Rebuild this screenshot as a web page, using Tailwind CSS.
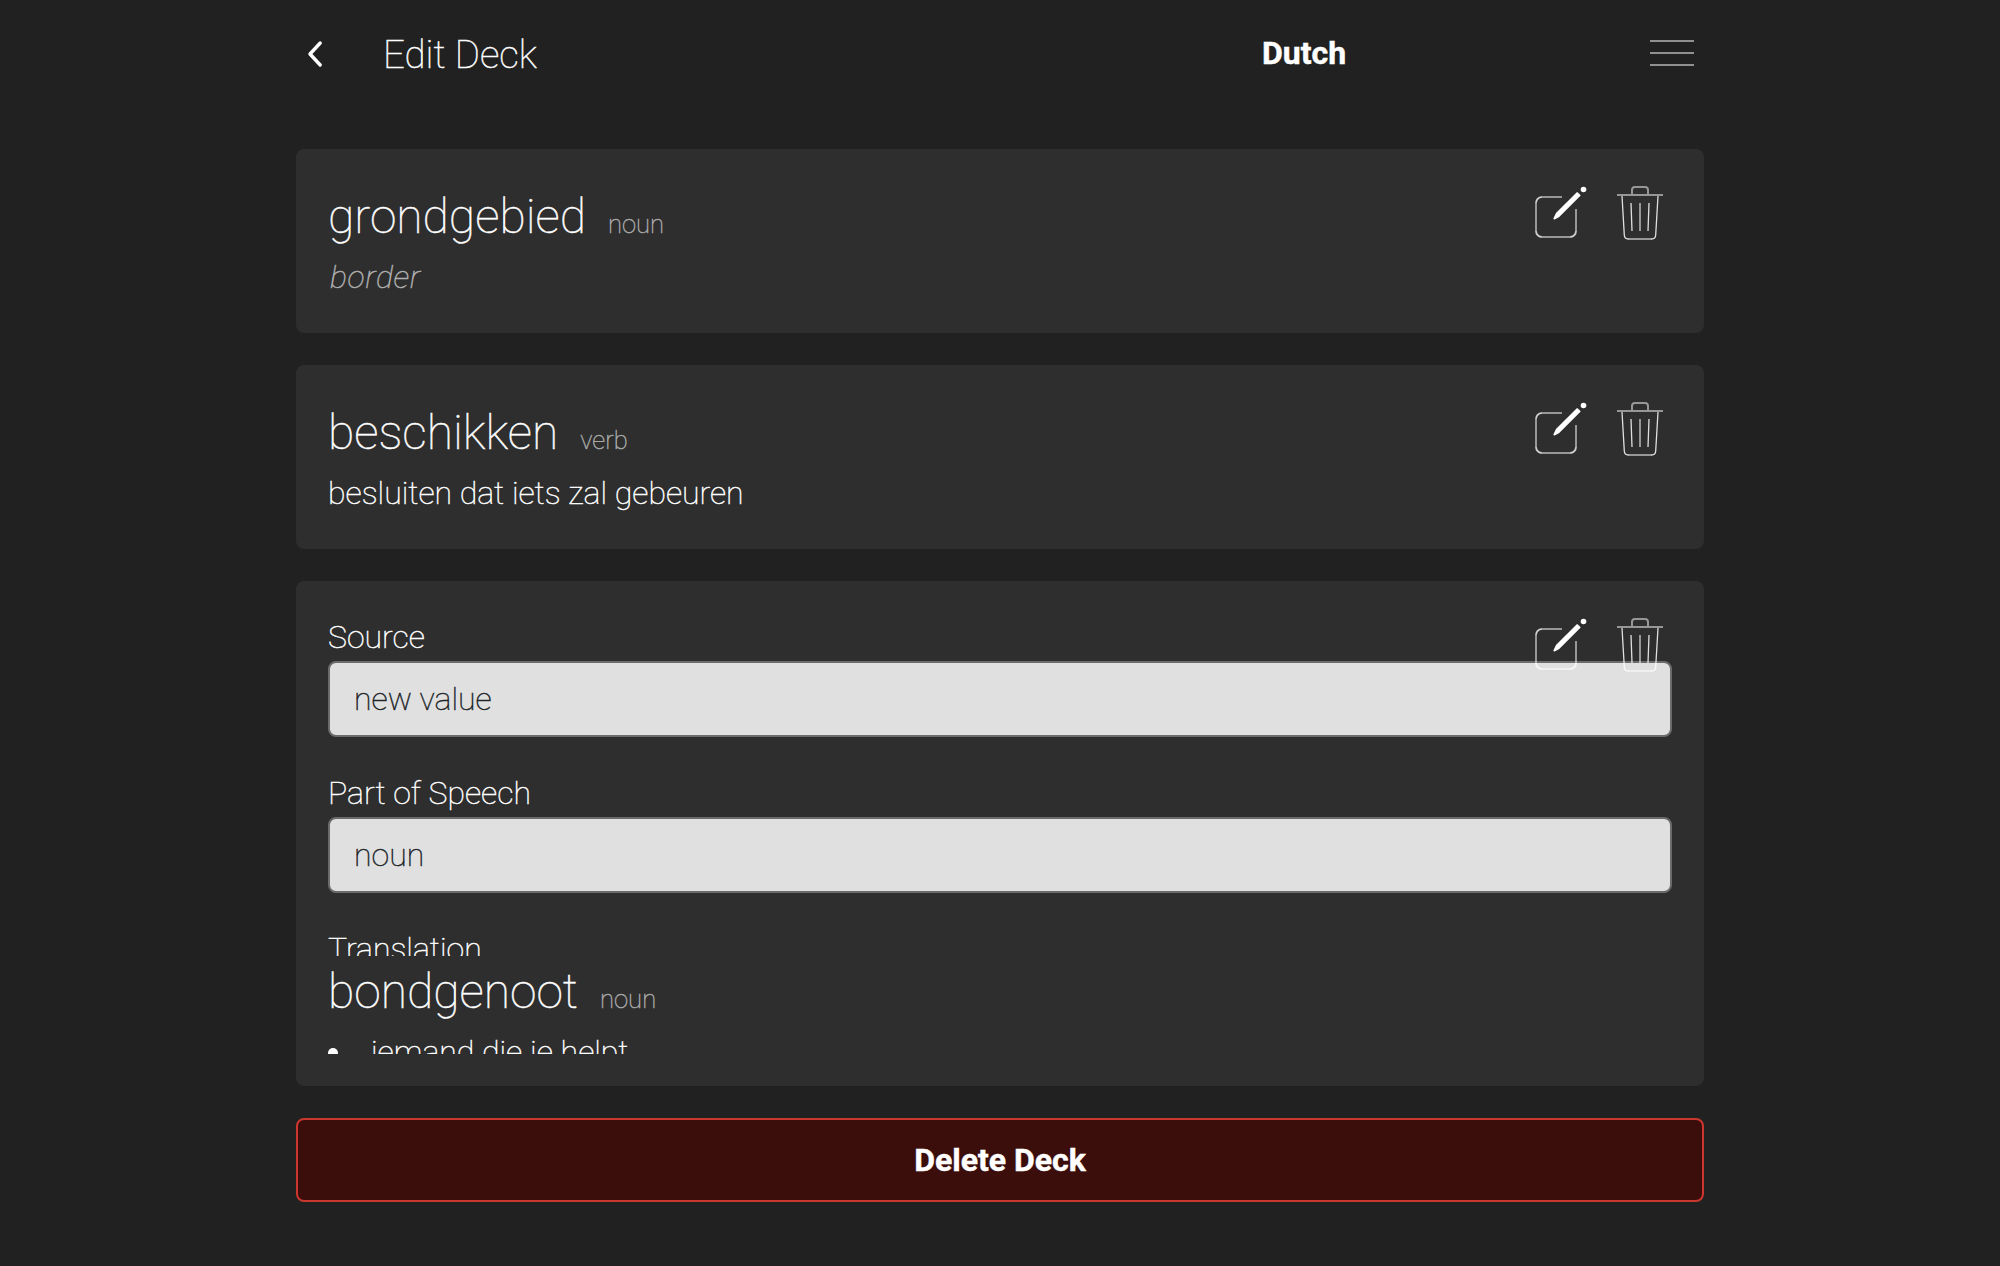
<!DOCTYPE html>
<html lang="en">
<head>
<meta charset="utf-8">
<title>Edit Deck</title>
<script src="https://cdn.jsdelivr.net/npm/@tailwindcss/browser@4"></script>
</head>
<body class="h-[1266px] overflow-hidden bg-[#212121] font-['Roboto',sans-serif] text-[32px] leading-[48px] font-thin text-white [-webkit-text-stroke:0.45px]">
<svg class="hidden">
  <symbol id="edit" viewBox="0 0 56 56">
    <path d="M28 13H8a6 6 0 0 0-6 6v28a6 6 0 0 0 6 6h28a6 6 0 0 0 6-6V25" fill="none" stroke="#fff" stroke-opacity=".5" stroke-width="2"/>
    <path d="M2 19a6 6 0 0 1 6-6M2 47a6 6 0 0 0 6 6M36 53a6 6 0 0 0 6-6" fill="none" stroke="#fff" stroke-opacity=".6" stroke-width="1.2"/>
    <path d="M43.2 8.8 46 11.4 25 32.4 20.3 34.9 20 34.4 22.4 29.5Z" fill="#fff" stroke="#fff" stroke-width="1.2" stroke-linejoin="round"/>
    <circle cx="49.5" cy="5.5" r="2.8" fill="#fff"/>
  </symbol>
  <symbol id="trash" viewBox="0 0 48 56">
    <g fill="none" stroke="#fff" stroke-opacity=".5" stroke-width="2">
      <path d="M1 11h46M16 10V6a3 3 0 0 1 3-3h10a3 3 0 0 1 3 3v4M24 19v28M12 55h24"/>
    </g>
    <g fill="none" stroke="#fff" stroke-opacity=".85" stroke-width="1.3">
      <path d="M6 12l2.3 39q.2 4 4.2 4M42 12l-2.3 39q-.2 4-4.2 4M15 19l1 28M33 19l-1 28"/>
    </g>
  </symbol>
</svg>
<div class="mx-auto w-[1408px]">
  <header class="flex h-[149px] items-start pt-6">
    <svg class="mt-[15px] ml-[11px] h-[30px] w-4" viewBox="0 0 16 30" fill="none" stroke="#fff" stroke-width="3.4" stroke-linecap="round" stroke-linejoin="round"><path d="M13.2 4 3 15l10.2 11"/></svg>
    <h1 class="mt-px ml-[60px] w-[879px] text-[38.4px] leading-[60px]">Edit Deck</h1>
    <div class="mt-[5px] w-[388px] font-bold">Dutch</div>
    <div class="mt-4 flex w-11 flex-col gap-[10px]">
      <div class="h-0.5 bg-[#909090]"></div>
      <div class="h-0.5 bg-[#909090]"></div>
      <div class="h-0.5 bg-[#909090]"></div>
    </div>
  </header>
  <main class="flex flex-col gap-8">
    <section class="relative h-[184px] rounded-lg bg-[#2e2e2e] p-8">
      <div class="flex items-baseline gap-[22px]"><h2 class="text-[48px] leading-[72px]">grondgebied</h2><span class="text-[25.6px] text-[#a8a8a8]">noun</span></div>
      <p class="pl-0.5 tracking-[0.6px] text-[#b0b0b0] italic">border</p>
      <div class="absolute top-[35px] right-10 flex gap-[26px]"><svg class="h-14 w-14"><use href="#edit"/></svg><svg class="h-14 w-12"><use href="#trash"/></svg></div>
    </section>
    <section class="relative h-[184px] rounded-lg bg-[#2e2e2e] p-8">
      <div class="flex items-baseline gap-[22px]"><h2 class="text-[48px] leading-[72px]">beschikken</h2><span class="text-[25.6px] text-[#a8a8a8]">verb</span></div>
      <p>besluiten dat iets zal gebeuren</p>
      <div class="absolute top-[35px] right-10 flex gap-[26px]"><svg class="h-14 w-14"><use href="#edit"/></svg><svg class="h-14 w-12"><use href="#trash"/></svg></div>
    </section>
    <section class="relative h-[505px] rounded-lg bg-[#2e2e2e] p-8">
      <div class="flex h-[343px] flex-col gap-8 overflow-hidden">
        <div class="shrink-0">
          <div>Source</div>
          <div class="flex h-[76px] items-center rounded-lg border-2 border-[#6b6b6b] bg-[#e0e0e0] px-6 text-[#212529]">new value</div>
        </div>
        <div class="shrink-0">
          <div>Part of Speech</div>
          <div class="flex h-[76px] items-center rounded-lg border-2 border-[#6b6b6b] bg-[#e0e0e0] px-6 text-[#212529]">noun</div>
        </div>
        <div class="shrink-0">Translation</div>
      </div>
      <div class="h-[98px] overflow-hidden">
        <div class="flex items-baseline gap-[22px]"><h2 class="text-[48px] leading-[72px]">bondgenoot</h2><span class="text-[25.6px] text-[#a8a8a8]">noun</span></div>
        <div class="flex gap-[33px]"><span class="mt-5 h-[10px] w-[10px] rounded-full bg-white"></span><span>iemand die je helpt</span></div>
      </div>
      <div class="absolute top-[35px] right-10 flex gap-[26px]"><svg class="h-14 w-14"><use href="#edit"/></svg><svg class="h-14 w-12"><use href="#trash"/></svg></div>
    </section>
    <button class="h-[84px] rounded-lg border-2 border-[#cb372f] bg-[#3c0e0b] font-bold">Delete Deck</button>
  </main>
</div>
</body>
</html>
